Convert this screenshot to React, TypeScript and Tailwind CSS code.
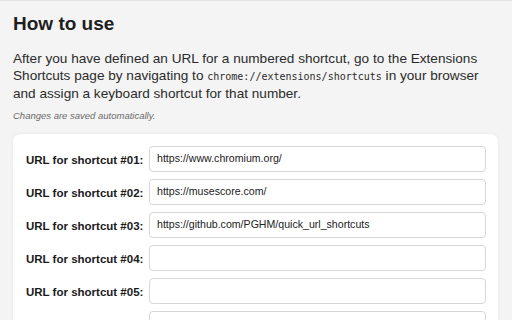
export default function App() {
  const urls = [
    'https://www.chromium.org/',
    'https://musescore.com/',
    'https://github.com/PGHM/quick_url_shortcuts',
    '',
    '',
    '',
  ];
  return (
    <div className="w-[512px] h-[320px] overflow-hidden bg-[#f4f4f4] border-t border-[#e4e4e4] px-[13px] font-['Liberation_Sans',Arial,sans-serif] text-[#222]">
      <h1 className="pt-[11px] text-[19px] leading-[23px] font-bold text-[#1e1e1e]">How to use</h1>
      <p className="mt-[15px] w-[480px] text-[13.6px] leading-[17px] text-[#2b2b2b]">
        After you have defined an URL for a numbered shortcut, go to the Extensions Shortcuts page by navigating to{' '}
        <code className="font-['DejaVu_Sans_Mono',monospace] text-[10px]">chrome://extensions/shortcuts</code> in your browser
        and assign a keyboard shortcut for that number.
      </p>
      <p className="mt-[8px] text-[9.5px] leading-[12px] italic text-[#6b6b6b]">Changes are saved automatically.</p>
      <div className="mt-[12px] w-[485px] rounded-[8px] bg-white shadow-[0_0_4px_rgba(0,0,0,0.06)] pl-[13px] pr-[12px] pt-[12px] pb-4 flex flex-col gap-[7px]">
        {urls.map((u, i) => (
          <div key={i} className="flex items-center">
            <label className="w-[123px] shrink-0 pt-[2px] text-[11.5px] leading-[14px] font-bold text-[#1a1a1a]">
              URL for shortcut #{String(i + 1).padStart(2, '0')}:
            </label>
            <div className="flex-1 h-[26px] rounded-[4px] border border-[#d6d6d6] bg-white px-[7px] flex items-center text-[10.6px] text-[#222]">
              {u}
            </div>
          </div>
        ))}
      </div>
    </div>
  );
}
